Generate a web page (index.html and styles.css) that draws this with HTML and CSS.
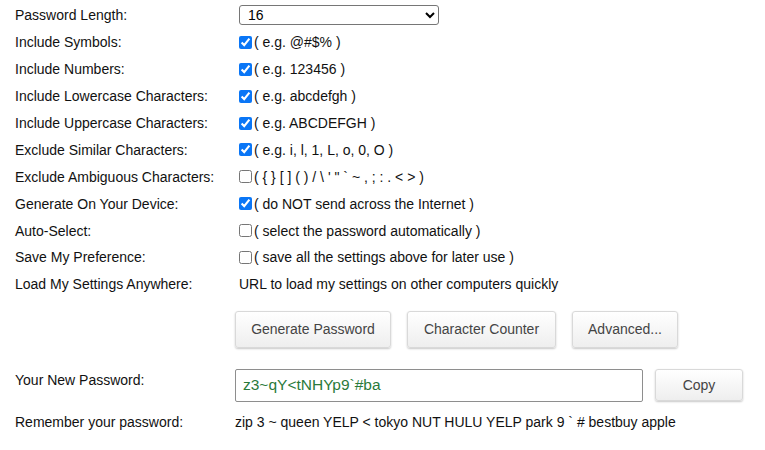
FILE: index.html
```html
<!DOCTYPE html>
<html>
<head>
<meta charset="utf-8">
<link rel="stylesheet" href="styles.css">
</head>
<body>
<div class="form">
  <div class="row">
    <div class="label">Password Length:</div>
    <div class="value">
      <select class="length">
        <option>16</option>
      </select>
    </div>
  </div>
  <div class="row">
    <div class="label">Include Symbols:</div>
    <div class="value"><input type="checkbox" checked><span>( e.g. @#$% )</span></div>
  </div>
  <div class="row">
    <div class="label">Include Numbers:</div>
    <div class="value"><input type="checkbox" checked><span>( e.g. 123456 )</span></div>
  </div>
  <div class="row">
    <div class="label">Include Lowercase Characters:</div>
    <div class="value"><input type="checkbox" checked><span>( e.g. abcdefgh )</span></div>
  </div>
  <div class="row">
    <div class="label">Include Uppercase Characters:</div>
    <div class="value"><input type="checkbox" checked><span>( e.g. ABCDEFGH )</span></div>
  </div>
  <div class="row">
    <div class="label">Exclude Similar Characters:</div>
    <div class="value"><input type="checkbox" checked><span>( e.g. i, l, 1, L, o, 0, O )</span></div>
  </div>
  <div class="row">
    <div class="label">Exclude Ambiguous Characters:</div>
    <div class="value"><input type="checkbox"><span>( { } [ ] ( ) / \ ' " ` ~ , ; : . &lt; &gt; )</span></div>
  </div>
  <div class="row">
    <div class="label">Generate On Your Device:</div>
    <div class="value"><input type="checkbox" checked><span>( do NOT send across the Internet )</span></div>
  </div>
  <div class="row">
    <div class="label">Auto-Select:</div>
    <div class="value"><input type="checkbox"><span>( select the password automatically )</span></div>
  </div>
  <div class="row">
    <div class="label">Save My Preference:</div>
    <div class="value"><input type="checkbox"><span>( save all the settings above for later use )</span></div>
  </div>
  <div class="row">
    <div class="label">Load My Settings Anywhere:</div>
    <div class="value">URL to load my settings on other computers quickly</div>
  </div>
  <div class="buttons">
    <button class="btn w-gen">Generate Password</button>
    <button class="btn w-cc">Character Counter</button>
    <button class="btn w-adv">Advanced...</button>
  </div>
  <div class="out-row">
    <div class="label">Your New Password:</div>
    <div class="out-value">
      <div class="pw">z3~qY&lt;tNHYp9`#ba</div>
      <button class="btn w-copy">Copy</button>
    </div>
  </div>
  <div class="mem-row">
    <div class="label">Remember your password:</div>
    <div>zip 3 ~ queen YELP &lt; tokyo NUT HULU YELP park 9 ` # bestbuy apple</div>
  </div>
</div>
</body>
</html>
```

FILE: styles.css
```css
html, body {
  margin: 0;
  padding: 0;
  background: #ffffff;
}

body {
  font-family: "Liberation Sans", Arial, sans-serif;
  font-size: 14px;
  color: #111;
}

.form {
  padding: 2px 0 0 15px;
}

.row {
  display: flex;
  align-items: center;
  height: 26.9px;
}

.label {
  width: 224px;
  flex: none;
}

.value {
  display: flex;
  align-items: center;
}

.value input[type="checkbox"] {
  width: 13px;
  height: 13px;
  margin: 0 2px 0 0;
  accent-color: #0a76f6;
}

.length {
  width: 200px;
  height: 20px;
  font-family: "Liberation Sans", Arial, sans-serif;
  font-size: 14px;
  border: 1px solid #767676;
  border-radius: 3px;
  background: #fff;
  padding: 0 4px;
  color: #000;
}

.buttons {
  display: flex;
  gap: 16px;
  margin: 13px 0 0 220px;
}

.btn {
  height: 37px;
  font-family: "Liberation Sans", Arial, sans-serif;
  font-size: 14px;
  color: #444;
  background: linear-gradient(#ffffff, #eeeeee);
  border: 1px solid #d9d9d9;
  border-radius: 3px;
  box-shadow: 0 1px 2px rgba(0, 0, 0, 0.22);
  padding: 0;
}

.w-gen { width: 156px; }
.w-cc { width: 149px; }
.w-adv { width: 106px; }
.w-copy { width: 88px; height: 32px; }

.out-row {
  display: flex;
  margin-top: 21px;
}

.out-row .label {
  width: 220px;
  padding-top: 3px;
}

.out-value {
  display: flex;
  gap: 12px;
}

.pw {
  box-sizing: border-box;
  width: 408px;
  height: 33px;
  border: 1px solid #8e8e8e;
  border-radius: 2px;
  padding: 6px 0 0 7px;
  color: #2a7a3a;
  font-size: 15.5px;
}

.mem-row {
  display: flex;
  margin-top: 12px;
}

.mem-row .label {
  width: 220px;
}
```
